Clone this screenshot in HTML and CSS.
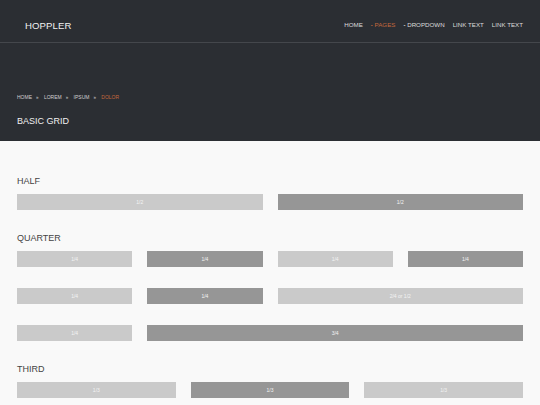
FILE: index.html
```html
<!DOCTYPE html>
<html lang="en">
<head>
  <meta charset="UTF-8" />
  <title>Hoppler - Basic Grid</title>
  <link rel="stylesheet" href="styles.css">
</head>
<body>
  <header class="site-header">
    <div class="topbar">
      <div class="logo">HOPPLER</div>
      <nav class="nav">
        <a href="#">HOME</a>
        <a href="#" class="active"><span class="dash">-</span> PAGES</a>
        <a href="#"><span class="dash">-</span> DROPDOWN</a>
        <a href="#">LINK TEXT</a>
        <a href="#">LINK TEXT</a>
      </nav>
    </div>
    <div class="hero">
      <div class="crumbs">
        <a href="#">HOME</a><span class="sep">»</span>
        <a href="#">LOREM</a><span class="sep">»</span>
        <a href="#">IPSUM</a><span class="sep">»</span>
        <span class="current">DOLOR</span>
      </div>
      <h1>BASIC GRID</h1>
    </div>
  </header>

  <main class="content">
    <h3>HALF</h3>
    <div class="row">
      <div class="col light">1/2</div>
      <div class="col dark">1/2</div>
    </div>

    <h3>QUARTER</h3>
    <div class="row">
      <div class="col light">1/4</div>
      <div class="col dark">1/4</div>
      <div class="col light">1/4</div>
      <div class="col dark">1/4</div>
    </div>
    <div class="row">
      <div class="col light">1/4</div>
      <div class="col dark">1/4</div>
      <div class="col light span2">2/4 or 1/2</div>
    </div>
    <div class="row">
      <div class="col light">1/4</div>
      <div class="col dark span3">3/4</div>
    </div>

    <h3>THIRD</h3>
    <div class="row">
      <div class="col light">1/3</div>
      <div class="col dark">1/3</div>
      <div class="col light">1/3</div>
    </div>
  </main>
</body>
</html>
```

FILE: styles.css
```css
/* Base */
* {
  box-sizing: border-box;
}

body {
  margin: 0;
  font-family: "Liberation Sans", Arial, sans-serif;
  background: #f9f9f9;
  color: #444;
}

a {
  color: inherit;
  text-decoration: none;
}

/* Header */
.site-header {
  background: #2b2e33;
  color: #eee;
}

.topbar {
  display: flex;
  align-items: center;
  justify-content: space-between;
  height: 43px;
  padding: 7px 17px 0 25px;
  border-bottom: 1px solid #44474c;
}

.logo {
  font-size: 9.6px;
  letter-spacing: 0.1px;
  color: #f0f0f0;
  margin-top: 2px;
}

.nav {
  display: flex;
  gap: 8px;
  font-size: 6.2px;
  color: #dcdcdc;
}

.nav .dash {
  font-size: 6px;
  font-weight: bold;
}

.nav .active {
  color: #c4683d;
}

.hero {
  height: 98px;
  padding: 51px 17px 0;
}

.crumbs {
  font-size: 5px;
  color: #d0d0d0;
}

.crumbs .sep {
  margin: 0 4px;
  font-size: 4.5px;
}

.crumbs .current {
  color: #c4683d;
}

.hero h1 {
  margin: 16px 0 0;
  font-size: 9px;
  font-weight: normal;
  color: #f0f0f0;
}

/* Grid */
.content {
  padding: 33px 17px 0;
}

.content h3 {
  margin: 0 0 8px;
  padding-top: 2px;
  font-size: 9px;
  font-weight: normal;
  color: #444;
}

.row {
  display: flex;
  gap: 15px;
  margin-bottom: 21px;
}

.col {
  flex: 1;
  height: 16px;
  line-height: 16px;
  text-align: center;
  font-size: 5px;
  color: #f4f4f4;
}

.col.light {
  background: #cacaca;
}

.col.dark {
  background: #969696;
}

.col.span2 {
  flex: 2 2 15px;
}

.col.span3 {
  flex: 3 3 30px;
}
```
